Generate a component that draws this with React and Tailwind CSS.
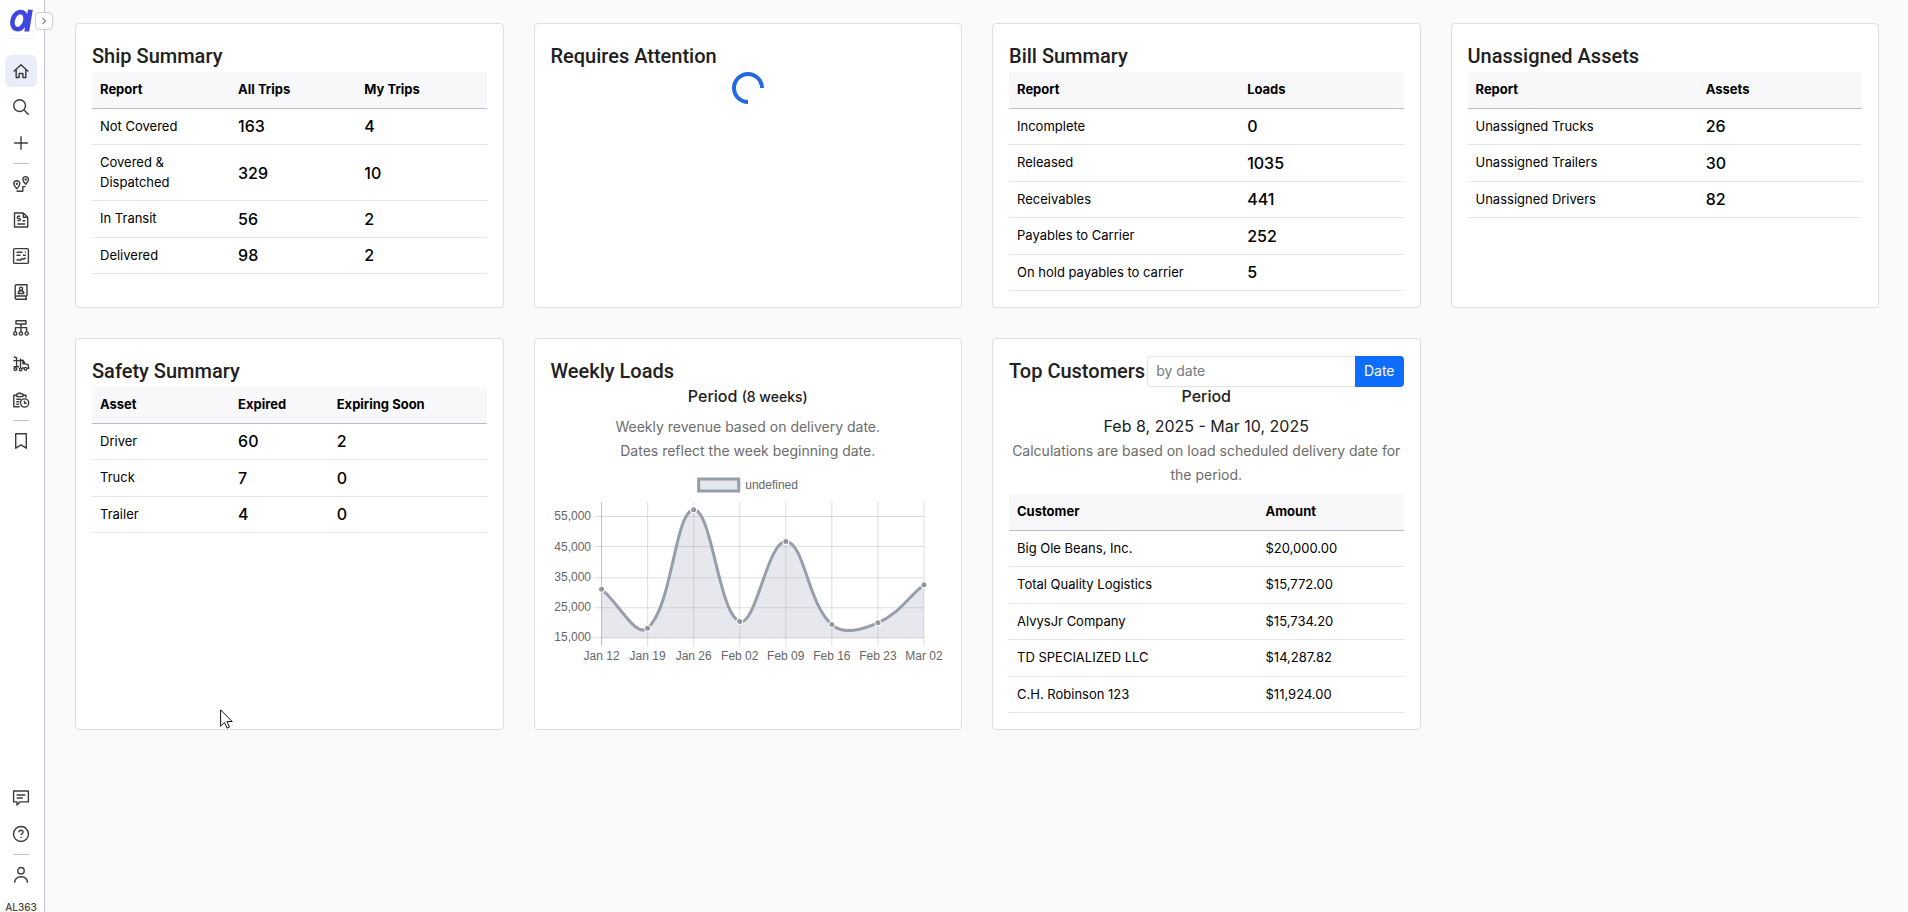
import { useState } from "react";

const shipRows = [
  ["Not Covered", 163, 4],
  ["Covered & Dispatched", 329, 10],
  ["In Transit", 56, 2],
  ["Delivered", 98, 2],
];

const billRows = [
  ["Incomplete", 0],
  ["Released", 1035],
  ["Receivables", 441],
  ["Payables to Carrier", 252],
  ["On hold payables to carrier", 5],
];

const assetRows = [
  ["Unassigned Trucks", 26],
  ["Unassigned Trailers", 30],
  ["Unassigned Drivers", 82],
];

const safetyRows = [
  ["Driver", 60, 2],
  ["Truck", 7, 0],
  ["Trailer", 4, 0],
];

const customerRows = [
  ["Big Ole Beans, Inc.", "$20,000.00"],
  ["Total Quality Logistics", "$15,772.00"],
  ["AlvysJr Company", "$15,734.20"],
  ["TD SPECIALIZED LLC", "$14,287.82"],
  ["C.H. Robinson 123", "$11,924.00"],
];

const weeks = [
  { label: "Jan 12", value: 31200 },
  { label: "Jan 19", value: 18300 },
  { label: "Jan 26", value: 57500 },
  { label: "Feb 02", value: 20500 },
  { label: "Feb 09", value: 47000 },
  { label: "Feb 16", value: 19500 },
  { label: "Feb 23", value: 20100 },
  { label: "Mar 02", value: 32700 },
];

const mainNav = [
  {
    name: "Home",
    icon: <path d="M.7 8.400 8 1.700l7.300 6.700M3.200 6.800v7.700h2.900v-4h3.800v4h2.900V6.800" />,
  },
  {
    name: "Search",
    icon: (
      <>
        <circle cx="6.600" cy="6.600" r="5.900" />
        <path d="M10.800 10.800 15.700 15.700" />
      </>
    ),
  },
  { name: "Add", icon: <path d="M8 1.200v13.600M1.200 8h13.600" /> },
];

const moduleNav = [
  {
    name: "Trips",
    icon: (
      <>
        <path d="M3.800 12.800C2.200 10.900 .8 9.500.8 7.700a3 3 0 0 1 6 0c0 1.800-1.400 3.200-3 5.100Z" />
        <circle cx="3.800" cy="7.700" r=".5" />
        <path d="M12.700 8.200c-1.600-1.800-2.800-3-2.800-4.800a2.800 2.800 0 0 1 5.600 0c0 1.800-1.200 3-2.800 4.800Z" />
        <circle cx="12.700" cy="3.400" r=".5" />
        <path d="M3.500 15.200h6.300v-4.600h2.800" />
      </>
    ),
  },
  {
    name: "Invoices",
    icon: (
      <>
        <path d="M1.500 1h8.800l4.400 4.200v9.800H1.500ZM10.300 1v4.200h4.400" />
        <path d="M7.200 4.400H5.300a1 1 0 0 0 0 2h1a1 1 0 0 1 0 2H4.300M5.800 3.300v1.100M5.800 8.400v1.100M9.500 8.700h2.700M4.300 12h7.900" />
      </>
    ),
  },
  {
    name: "Reports",
    icon: (
      <>
        <rect x=".6" y=".6" width="14.800" height="14.800" rx="1" />
        <path d="M3.500 4.300h6M3.500 7.300h4M12 4.300h.8M10 7.300h2.800M3.500 12.400l2-1 1.600 1.100 2-2 1.300.8 2.300-1.500" />
      </>
    ),
  },
  {
    name: "Contacts",
    icon: (
      <>
        <path d="M14 12V.7H3.600A1.400 1.400 0 0 0 2.200 2.100v11.600c0 .8.600 1.500 1.400 1.500H14M14 12H3.600a1.400 1.400 0 0 0-1.400 1.400M13 12v3" />
        <circle cx="8" cy="4.700" r="1.600" />
        <path d="M5.200 9.500c0-1.700 1-2.700 2.800-2.700s2.800 1 2.800 2.700Z" />
      </>
    ),
  },
  {
    name: "Organization",
    icon: (
      <>
        <rect x="3" y=".8" width="10" height="3.200" />
        <path d="M8 4v8M2.400 12V7.600h11.200V12" />
        <circle cx="2.300" cy="13.500" r="1.600" />
        <circle cx="8" cy="13.500" r="1.600" />
        <circle cx="13.700" cy="13.500" r="1.600" />
      </>
    ),
  },
  {
    name: "Fleet",
    icon: (
      <>
        <path d="M.8.700 3.600 2v9.500M.300 4.600h7.200M.500 10.800H6M7.500 2.600v9.200M7.500 4.600l2.400-.4 2.300 3.600 2.900.9.700 3.500h-1.500M9.900 4.200v3.600h2.300M8.800 12h2.200" />
        <circle cx="2.400" cy="13.100" r="1.400" />
        <circle cx="7.600" cy="13.400" r="1.300" />
        <circle cx="12.600" cy="12.800" r="1.400" />
      </>
    ),
  },
  {
    name: "Schedule",
    icon: (
      <>
        <path d="M6.600 14.800H.8V3.200h3V1.900h1.500a1.500 1.500 0 0 1 2.800 0h1.800v1.300h3v2.600M3.800 3.200v1.400h6.100V3.200" />
        <path d="M3.300 7.200h4.600M3.300 9.700h3M3.300 12.200h2.500" />
        <circle cx="11.600" cy="11" r="4.100" />
        <path d="M11.500 8.800v2.400h2.100" />
      </>
    ),
  },
];

const savedNav = [{ name: "Bookmarks", icon: <path d="M2.700.7h10.600v14.500L8 11.900l-5.300 3.300Z" /> }];

const helpNav = [
  {
    name: "Messages",
    icon: <path d="M.6 1h14.800v10.900H6.900L4 14.900v-3H.6ZM3.700 5h8.600M3.700 8h6.100" />,
  },
  {
    name: "Help",
    icon: (
      <>
        <circle cx="8" cy="8" r="7.500" />
        <path d="M6 6.300c0-1.300.8-2 2-2s2 .8 2 1.900c0 1.500-2 1.500-2 3M8 10.900v1.200" />
      </>
    ),
  },
];

const accountNav = [
  {
    name: "Account",
    icon: (
      <>
        <circle cx="8" cy="3.700" r="3.200" />
        <path d="M1.600 15.700c0-3.600 2.400-5.900 6.400-5.900s6.400 2.300 6.400 5.900" />
      </>
    ),
  },
];

const NavGroup = ({ items, active, onSelect }) =>
  items.map((item) => (
    <button
      key={item.name}
      type="button"
      aria-label={item.name}
      onClick={() => onSelect(item.name)}
      className={`flex h-8 w-8 shrink-0 items-center justify-center rounded-md ${
        active === item.name ? "bg-[#e9edf7]" : "hover:bg-gray-100"
      }`}
    >
      <svg
        viewBox="0 0 16 16"
        className="h-4 w-4 overflow-visible text-[#3b3b3f]"
        fill="none"
        stroke="currentColor"
        strokeWidth="1.4"
        strokeLinejoin="round"
      >
        {item.icon}
      </svg>
    </button>
  ));

const Divider = () => <div className="h-px w-4 shrink-0 bg-[#c4c4c8]" />;

const Sidebar = () => {
  const [active, setActive] = useState("Home");

  return (
    <aside className="relative flex h-screen w-[45px] shrink-0 flex-col items-center gap-1 border-r border-[#c3c4d3] bg-white pr-0.5">
      <a href="#" aria-label="Alvys" className="mb-3 flex h-[39px] w-8 shrink-0 justify-center rounded-b-md border-b border-gray-100 pt-2">
        <svg viewBox="0 0 24 24" className="h-6 w-6" fill="none" stroke="#3f46e0">
          <ellipse cx="10" cy="12.600" rx="6.200" ry="8.900" strokeWidth="4.600" transform="rotate(20 10 12.600)" />
          <path d="M18.900 1.800h4.900L20.200 23.600h-4.900Z" fill="#3f46e0" stroke="none" />
        </svg>
      </a>
      <button
        type="button"
        aria-label="Expand menu"
        className="absolute top-3 -right-[9px] flex h-[18px] w-[18px] items-center justify-center rounded-sm border border-[#cfcfd6] bg-white"
      >
        <svg viewBox="0 0 10 10" className="h-2.5 w-2.5" fill="none" stroke="#8b8b95" strokeWidth="1.2">
          <path d="m3.500 2 3 3-3 3" />
        </svg>
      </button>

      <NavGroup items={mainNav} active={active} onSelect={setActive} />
      <Divider />
      <NavGroup items={moduleNav} active={active} onSelect={setActive} />
      <Divider />
      <NavGroup items={savedNav} active={active} onSelect={setActive} />

      <div className="grow" />
      <NavGroup items={helpNav} active={active} onSelect={setActive} />
      <Divider />
      <NavGroup items={accountNav} active={active} onSelect={setActive} />
      <span className="mt-[7px] text-[10px] leading-none font-medium text-[#4a3f3a]">AL363</span>
    </aside>
  );
};

const Card = ({ title, extra, children }) => (
  <section className="rounded-sm border border-[#dedfe1] bg-white p-4">
    <div className="flex h-8 items-center">
      <h2 className="shrink-0 font-[Roboto,sans-serif] text-xl leading-8 font-medium text-[#212121]">{title}</h2>
      {extra}
    </div>
    {children}
  </section>
);

// numeric cells are a size up from the label column
const DataTable = ({ columns, widths, rows, largeValues = true }) => (
  <table className="w-full table-fixed text-left text-[13px] leading-normal text-black">
    <thead>
      <tr className="border-b border-[#bcbdc6] bg-[#f8f8fb]">
        {columns.map((col, i) => (
          <th key={col} scope="col" className={`px-2 py-2 font-bold ${widths[i]}`}>
            {col}
          </th>
        ))}
      </tr>
    </thead>
    <tbody>
      {rows.map((row) => (
        <tr key={row[0]} className="border-b border-[#e6e6e8]">
          {row.map((cell, i) => (
            <td
              key={i}
              className={i > 0 && largeValues ? "px-2 text-base leading-none font-medium" : "px-2 py-2"}
            >
              {cell}
            </td>
          ))}
        </tr>
      ))}
    </tbody>
  </table>
);

const CHART = { left: 50.5, step: 46, top: 32, bottom: 168 };
const ticks = [55000, 45000, 35000, 25000, 15000];

const yFor = (value) => CHART.bottom - ((value - 15000) / 10000) * 30.2;

// smooth line through the points, tension 0.4
const buildLine = (pts) => {
  const tension = 0.4;
  const clamp = (y) => Math.min(Math.max(y, CHART.top), CHART.bottom);
  const controls = pts.map((p, i) => {
    const prev = pts[i - 1] || p;
    const next = pts[i + 1] || p;
    const d01 = Math.hypot(p.x - prev.x, p.y - prev.y);
    const d12 = Math.hypot(next.x - p.x, next.y - p.y);
    const fa = (tension * d01) / (d01 + d12);
    const fb = (tension * d12) / (d01 + d12);
    const dx = next.x - prev.x;
    const dy = next.y - prev.y;
    return {
      before: [p.x - fa * dx, clamp(p.y - fa * dy)],
      after: [p.x + fb * dx, clamp(p.y + fb * dy)],
    };
  });

  return pts
    .map((p, i) =>
      i === 0 ? `M${p.x} ${p.y}` : `C${controls[i - 1].after} ${controls[i].before} ${p.x} ${p.y}`
    )
    .join(" ");
};

const WeeklyChart = () => {
  const points = weeks.map((w, i) => ({ x: CHART.left + i * CHART.step, y: yFor(w.value) }));
  const line = buildLine(points);
  const right = points[points.length - 1].x;

  return (
    <svg
      viewBox="0 0 394 197"
      role="img"
      aria-label="Weekly loads"
      className="mt-2 block h-auto w-full font-['Liberation_Sans',Arial,sans-serif] text-xs"
    >
      <rect x="147.500" y="9" width="40" height="12" fill="#e5e8ee" stroke="#969eac" strokeWidth="3" />
      <text x="194" y="16" dominantBaseline="middle" fill="#666">
        undefined
      </text>

      {ticks.map((t) => (
        <g key={t}>
          <path d={`M43 ${Math.round(yFor(t)) - 0.5}H${right}`} stroke="#000" strokeOpacity="0.13" />
          <text x="40" y={yFor(t)} textAnchor="end" dominantBaseline="middle" fill="#666">
            {t.toLocaleString("en-US")}
          </text>
        </g>
      ))}
      {points.map((p, i) => (
        <g key={weeks[i].label}>
          <path d={`M${p.x} ${CHART.top}V176`} stroke="#000" strokeOpacity={i === 0 ? 0.25 : 0.13} />
          <text x={p.x} y="190" textAnchor="middle" fill="#666">
            {weeks[i].label}
          </text>
        </g>
      ))}

      <path d={`${line}V${CHART.bottom}H${CHART.left}Z`} fill="#969eb4" fillOpacity="0.24" />
      <path d={line} fill="none" stroke="#969eac" strokeWidth="3" />
      {points.map((p) => (
        <circle key={p.x} cx={p.x} cy={p.y} r="3" fill="#9095a0" stroke="#fff" />
      ))}
    </svg>
  );
};

const DateFilter = () => {
  const [value, setValue] = useState("");

  return (
    <div className="ml-0.5 flex h-[31px] min-w-0 grow text-sm">
      <input
        type="text"
        aria-label="Filter by date"
        placeholder="by date"
        value={value}
        onChange={(e) => setValue(e.target.value)}
        className="min-w-0 grow rounded-l-sm border border-r-0 border-[#e2e4e8] bg-white px-2 placeholder:text-[#75797e] focus:outline-none"
      />
      <button type="button" className="rounded-r-sm bg-[#0d6efd] px-[9px] text-white hover:bg-blue-700">
        Date
      </button>
    </div>
  );
};

const App = () => {
  return (
    <div className="flex h-screen bg-[#fafafa] font-[Inter,sans-serif] text-[#212121]">
      <Sidebar />

      <main className="min-w-0 grow overflow-auto pt-[23px] pr-[29px] pl-[30px]">
        <div className="grid grid-cols-4 gap-[30px]">
          <Card title="Ship Summary">
            <DataTable
              columns={["Report", "All Trips", "My Trips"]}
              widths={["w-[35%]", "w-[32%]", "w-[33%]"]}
              rows={shipRows}
            />
          </Card>

          <Card title="Requires Attention">
            <svg
              viewBox="0 0 32 32"
              role="status"
              aria-label="Loading"
              className="mx-auto h-8 w-8"
              fill="none"
              stroke="#2569e0"
              strokeWidth="4"
            >
              <path d="M30 16A14 14 0 1 0 16 30" />
            </svg>
          </Card>

          <Card title="Bill Summary">
            <DataTable columns={["Report", "Loads"]} widths={["w-7/12", "w-5/12"]} rows={billRows} />
          </Card>

          <Card title="Unassigned Assets">
            <DataTable columns={["Report", "Assets"]} widths={["w-7/12", "w-5/12"]} rows={assetRows} />
          </Card>

          <Card title="Safety Summary">
            <DataTable
              columns={["Asset", "Expired", "Expiring Soon"]}
              widths={["w-[35%]", "w-[25%]", "w-[40%]"]}
              rows={safetyRows}
            />
          </Card>

          <Card title="Weekly Loads">
            <div className="text-center">
              <h3 className="mb-2 text-base leading-[19px] font-medium">
                Period <span className="text-sm leading-none">(8 weeks)</span>
              </h3>
              <p className="leading-6 text-[#6c6c6c]">
                <small className="text-sm leading-none">Weekly revenue based on delivery date.</small>
              </p>
              <p className="leading-6 text-[#6c6c6c]">
                <small className="text-sm leading-none">Dates reflect the week beginning date.</small>
              </p>
            </div>
            <WeeklyChart />
          </Card>

          <Card title="Top Customers" extra={<DateFilter />}>
            <div className="mb-2 text-center">
              <h3 className="mb-2 text-base leading-[19px] font-medium">Period</h3>
              <p className="leading-6">Feb 8, 2025 - Mar 10, 2025</p>
              <p className="leading-6 text-[#6c6c6c]">
                <small className="text-sm leading-none">
                  Calculations are based on load scheduled delivery date for the period.
                </small>
              </p>
            </div>
            <DataTable
              columns={["Customer", "Amount"]}
              widths={["w-[63%]", "w-[37%]"]}
              rows={customerRows}
              largeValues={false}
            />
          </Card>
        </div>
      </main>

      {/* mouse pointer */}
      <svg viewBox="0 0 13 20" className="pointer-events-none absolute top-[709px] left-[220px] h-5 w-[13px]">
        <path
          d="M.6.8v16.400l3.900-3.700 2.600 5.700 2.400-1.100-2.600-5.600h5.300Z"
          fill="#fff"
          stroke="#111"
          strokeWidth="1"
        />
      </svg>
    </div>
  );
};

export default App;
